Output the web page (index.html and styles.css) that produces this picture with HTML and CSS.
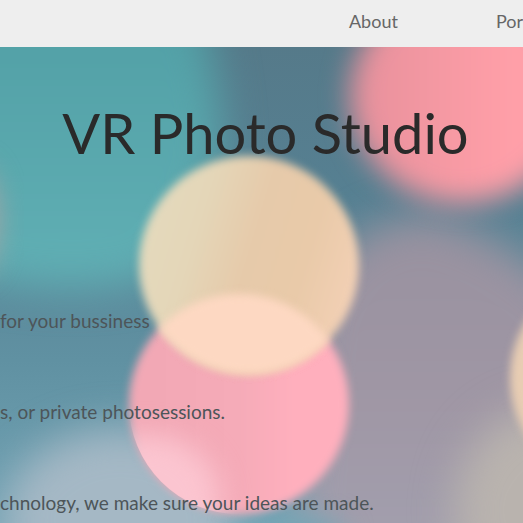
FILE: index.html
```html
<!DOCTYPE html>
<html lang="en">
<head>
<meta charset="utf-8">
<meta name="viewport" content="width=device-width, initial-scale=1">
<title>VR Photo Studio</title>
<link rel="stylesheet" href="styles.css">
</head>
<body>
<header class="topbar">
  <nav class="nav">
    <a href="#about">About</a>
    <a href="#por">Por</a>
  </nav>
</header>
<main class="hero">
  <svg class="backdrop" viewBox="0 47 523 476" preserveAspectRatio="xMidYMin slice" aria-hidden="true">
    <defs>
      <linearGradient id="base" x1="0" y1="0" x2="0" y2="1">
        <stop offset="0" stop-color="#557887"/>
        <stop offset="0.22" stop-color="#568092"/>
        <stop offset="0.4" stop-color="#6091a2"/>
        <stop offset="0.6" stop-color="#74a5b6"/>
      </linearGradient>
      <linearGradient id="teal" x1="0" y1="0" x2="0" y2="1">
        <stop offset="0.1" stop-color="#519fa5"/>
        <stop offset="1" stop-color="#61b0b5"/>
      </linearGradient>
      <linearGradient id="rose" x1="0" y1="0" x2="1" y2="0">
        <stop offset="0.1" stop-color="#ea929d"/>
        <stop offset="0.7" stop-color="#ff9fa8"/>
      </linearGradient>
      <linearGradient id="cream" x1="0" y1="0.3" x2="1" y2="0.6">
        <stop offset="0" stop-color="#e4dabd"/>
        <stop offset="0.25" stop-color="#e4d6b8"/>
        <stop offset="0.5" stop-color="#e6caaa"/>
        <stop offset="0.75" stop-color="#e9caa9"/>
        <stop offset="1" stop-color="#f3d0b5"/>
      </linearGradient>
      <linearGradient id="pink" x1="0" y1="0" x2="1" y2="0">
        <stop offset="0.1" stop-color="#f2a8b5"/>
        <stop offset="0.5" stop-color="#f5abb8"/>
        <stop offset="0.75" stop-color="#ffafbd"/>
      </linearGradient>
      <linearGradient id="mauve" x1="0" y1="0" x2="0" y2="1">
        <stop offset="0" stop-color="#98919f"/>
        <stop offset="0.5" stop-color="#a097a5"/>
        <stop offset="1" stop-color="#a3a2b1"/>
      </linearGradient>
      <filter id="soft4" x="-20%" y="-20%" width="140%" height="140%" color-interpolation-filters="sRGB"><feGaussianBlur stdDeviation="4"/></filter>
      <filter id="soft14" x="-50%" y="-50%" width="200%" height="200%" color-interpolation-filters="sRGB"><feGaussianBlur stdDeviation="14"/></filter>
      <filter id="soft20" x="-50%" y="-50%" width="200%" height="200%" color-interpolation-filters="sRGB"><feGaussianBlur stdDeviation="20"/></filter>
      <clipPath id="creamShape"><ellipse cx="249" cy="265" rx="110" ry="109"/></clipPath>
      <clipPath id="pinkShape"><ellipse cx="239" cy="404" rx="110" ry="110"/></clipPath>
    </defs>
    <rect x="-300" y="0" width="1200" height="900" fill="url(#base)"/>
    <path d="M-60 -30H190Q222 70 222 150Q200 235 160 276Q80 304 -60 272Z" fill="url(#teal)" filter="url(#soft20)"/>
    <ellipse cx="-28" cy="220" rx="26" ry="55" fill="#a5a5a5" filter="url(#soft14)"/>
    <path d="M310 320Q330 220 430 215Q530 240 590 330V470L480 590H290Z" fill="url(#mauve)" filter="url(#soft20)"/>
    <ellipse cx="462" cy="96" rx="112" ry="107" fill="url(#rose)" filter="url(#soft14)"/>
    <ellipse cx="121" cy="520" rx="118" ry="92" fill="#a5b8c5" filter="url(#soft20)"/>
    <ellipse cx="552" cy="510" rx="98" ry="104" fill="#b9b3ae" filter="url(#soft20)"/>
    <ellipse cx="290" cy="537" rx="55" ry="22" fill="#72a5b5" filter="url(#soft14)"/>
    <ellipse cx="239" cy="404" rx="110" ry="110" fill="url(#pink)" filter="url(#soft4)"/>
    <g clip-path="url(#pinkShape)">
      <ellipse cx="145" cy="500" rx="75" ry="66" fill="#fbc5d0" filter="url(#soft14)"/>
    </g>
    <ellipse cx="249" cy="265" rx="110" ry="109" fill="url(#cream)" filter="url(#soft4)"/>
    <g filter="url(#soft4)">
      <g clip-path="url(#creamShape)">
        <ellipse cx="239" cy="404" rx="110" ry="110" fill="#fdd8c2"/>
      </g>
    </g>
    <ellipse cx="620" cy="378" rx="110" ry="109" fill="#e8cdb3" filter="url(#soft4)"/>
  </svg>
  <h1 class="title">VR Photo Studio</h1>
  <div class="pitch">
    <p>for your bussiness</p>
    <p>s, or private photosessions.</p>
    <p>chnology, we make sure your ideas are made.</p>
  </div>
</main>
</body>
</html>
```
FILE: styles.css
```css
* {
  box-sizing: border-box;
}

body {
  margin: 0;
  min-height: 100vh;
  display: flex;
  flex-direction: column;
  overflow: hidden;
  font-family: Lato, "Open Sans", sans-serif;
  font-size: 18px;
  line-height: 23px;
  color: #555;
}

.topbar {
  padding: 10px 0 14px;
  background: #eee;
}

.nav {
  display: flex;
  justify-content: flex-end;
  gap: 98px;
}

.nav a {
  color: #666;
  text-decoration: none;
}

.hero {
  position: relative;
  flex: 1;
  overflow: hidden;
}

.backdrop {
  position: absolute;
  inset: 0;
  width: 100%;
  height: 100%;
}

.title {
  position: relative;
  margin: 0;
  padding: 54px 0 0 8px;
  font-size: 56px;
  font-weight: 400;
  line-height: 64px;
  text-align: center;
  color: #2a2a2a;
}

.pitch {
  position: relative;
  display: grid;
  gap: 68px;
  padding-top: 144px;
  font-size: 19px;
  color: #4d5559;
}

.pitch p {
  margin: 0;
  white-space: nowrap;
}
```
